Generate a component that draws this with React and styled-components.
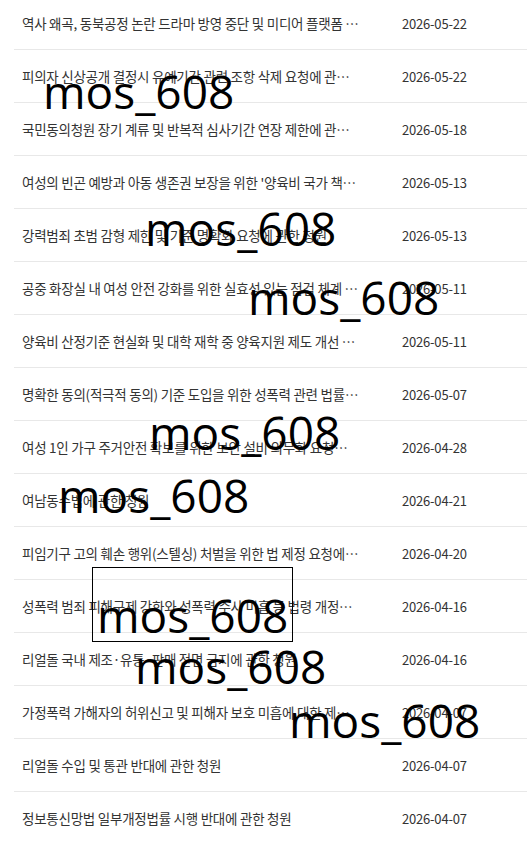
import React from 'react';
import styled, { createGlobalStyle } from 'styled-components';

const GlobalStyle = createGlobalStyle`
  html, body {
    margin: 0;
    padding: 0;
    background: #ffffff;
  }
  body {
    font-family: "Noto Sans CJK KR", "Noto Sans", sans-serif;
    color: #333;
    overflow: hidden;
  }
`;

const Page = styled.div`
  position: relative;
  width: 527px;
  height: 843px;
  overflow: hidden;
`;

const List = styled.ul`
  list-style: none;
  margin: -3px 0 0 0;
  padding: 0 0 0 14px;
`;

const Row = styled.li`
  display: flex;
  align-items: center;
  height: 52px;
  padding: 0 8px;
  border-bottom: 1px solid #e8e8e8;
`;

const Title = styled.span`
  flex: 0 0 337px;
  margin-right: 43px;
  font-size: 13.5px;
  letter-spacing: -0.25px;
  color: #333;
  white-space: nowrap;
  overflow: hidden;
  text-overflow: ellipsis;
`;

const Date = styled.span`
  font-size: 13px;
  letter-spacing: -0.2px;
  color: #333;
`;

const Mark = styled.span`
  position: absolute;
  top: ${({ $y }) => $y}px;
  left: ${({ $x }) => $x}px;
  font-family: "Open Sans", sans-serif;
  font-size: 46px;
  line-height: 1;
  color: #000;
  white-space: nowrap;
  pointer-events: none;
  ${({ $boxed }) =>
    $boxed &&
    `
    padding: 24px 4px 3px 4px;
    margin: -25px 0 0 -5px;
    border: 1px solid #000;
  `}
`;

const petitions = [
  ['역사 왜곡, 동북공정 논란 드라마 방영 중단 및 미디어 플랫폼 책임 강화에 관한 청원', '2026-05-22'],
  ['피의자 신상공개 결정시 유예기간 관련 조항 삭제 요청에 관한 청원', '2026-05-22'],
  ['국민동의청원 장기 계류 및 반복적 심사기간 연장 제한에 관한 청원', '2026-05-18'],
  ["여성의 빈곤 예방과 아동 생존권 보장을 위한 '양육비 국가 책임제' 도입 청원", '2026-05-13'],
  ['강력범죄 초범 감형 제한 및 기준 명확화 요청에 관한 청원', '2026-05-13'],
  ['공중 화장실 내 여성 안전 강화를 위한 실효성 있는 점검 체계 마련 청원', '2026-05-11'],
  ['양육비 산정기준 현실화 및 대학 재학 중 양육지원 제도 개선 요청', '2026-05-11'],
  ['명확한 동의(적극적 동의) 기준 도입을 위한 성폭력 관련 법률 개정 청원', '2026-05-07'],
  ['여성 1인 가구 주거안전 확보를 위한 보안 설비 의무화 요청에 관한 청원', '2026-04-28'],
  ['여남동수법에 관한 청원', '2026-04-21'],
  ['피임기구 고의 훼손 행위(스텔싱) 처벌을 위한 법 제정 요청에 관한 청원', '2026-04-20'],
  ['성폭력 범죄 피해구제 강화와 성폭력 수사 미흡 등 법령 개정에 관한 청원', '2026-04-16'],
  ['리얼돌 국내 제조·유통·판매 전면 금지에 관한 청원', '2026-04-16'],
  ['가정폭력 가해자의 허위신고 및 피해자 보호 미흡에 대한 제도 개선 청원', '2026-04-07'],
  ['리얼돌 수입 및 통관 반대에 관한 청원', '2026-04-07'],
  ['정보통신망법 일부개정법률 시행 반대에 관한 청원', '2026-04-07'],
];

// watermark spots: left edge and top of line box
const marks = [
  { x: 43, y: 68 },
  { x: 145, y: 205 },
  { x: 248, y: 274 },
  { x: 149, y: 409 },
  { x: 58, y: 472 },
  { x: 97, y: 592, boxed: true },
  { x: 135, y: 643 },
  { x: 289, y: 697 },
];

export default function App() {
  return (
    <Page>
      <GlobalStyle />
      <List>
        {petitions.map(([title, date], i) => (
          <Row key={i}>
            <Title>{title}</Title>
            <Date>{date}</Date>
          </Row>
        ))}
      </List>
      {marks.map((m, i) => (
        <Mark key={i} $x={m.x} $y={m.y} $boxed={m.boxed}>
          mos_608
        </Mark>
      ))}
    </Page>
  );
}
